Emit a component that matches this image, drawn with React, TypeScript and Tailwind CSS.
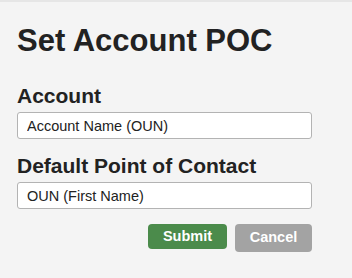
export default function App() {
  return (
    <div className="min-h-[278px] w-[352px] border-t-2 border-[#e6e6e6] bg-[#f4f4f4] pl-[17px] pt-[21px] font-['Liberation_Sans',Arial,sans-serif] text-[#222]">
      <div className="flex w-[295px] flex-col">
        <h1 className="text-[31px] font-bold leading-[36px]">Set Account POC</h1>

        <label className="mt-[25px] text-[21px] font-bold leading-[24px]">Account</label>
        <input
          readOnly
          value="Account Name (OUN)"
          className="mt-[4px] h-[27px] rounded-[3px] border border-[#b3b3b3] bg-white px-[9px] text-[14.5px] text-[#222] outline-none"
        />

        <label className="mt-[15px] text-[21px] font-bold leading-[24px]">Default Point of Contact</label>
        <input
          readOnly
          value="OUN (First Name)"
          className="mt-[4px] h-[27px] rounded-[3px] border border-[#b3b3b3] bg-white px-[9px] text-[14.5px] text-[#222] outline-none"
        />

        <div className="mt-[15px] flex items-start justify-end gap-[8px]">
          <button className="h-[25px] w-[79px] rounded-[4px] bg-[#4b8b4b] text-[14.5px] font-bold text-white">
            Submit
          </button>
          <button className="h-[28px] w-[77px] rounded-[4px] bg-[#a3a3a3] text-[14.5px] font-bold text-white">
            Cancel
          </button>
        </div>
      </div>
    </div>
  );
}
